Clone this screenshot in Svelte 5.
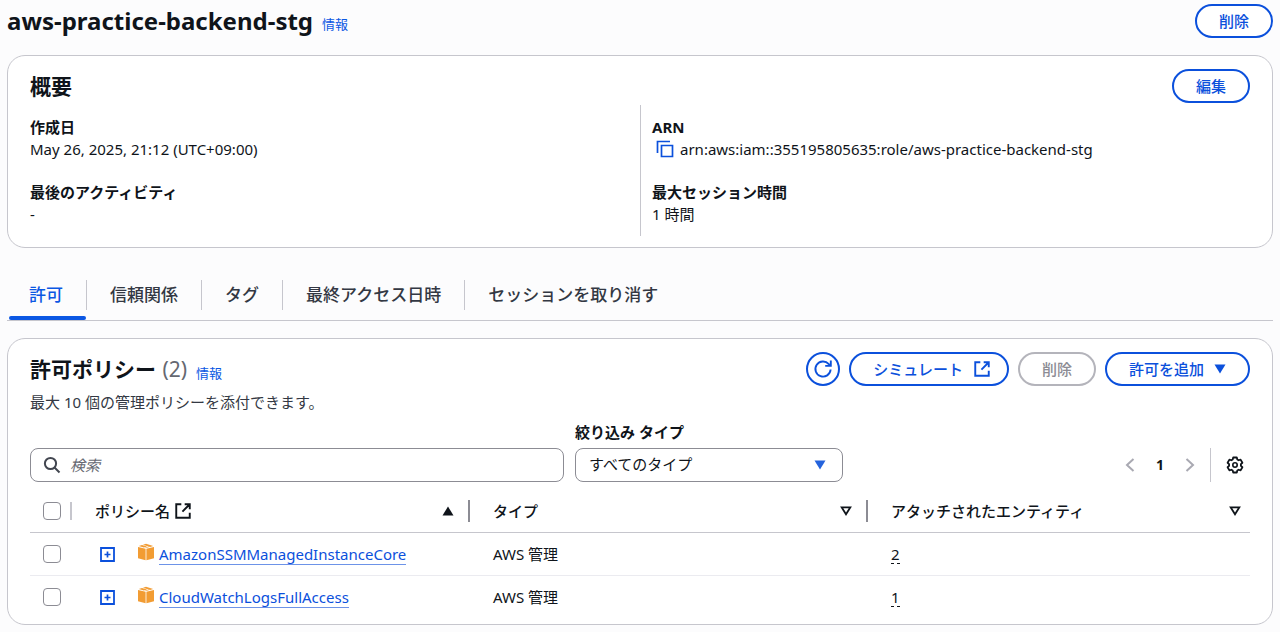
<script>
  const summaryLeft = [
    { label: '作成日', value: 'May 26, 2025, 21:12 (UTC+09:00)' },
    { label: '最後のアクティビティ', value: '-' }
  ];
  const summaryRight = [
    { label: 'ARN', value: 'arn:aws:iam::355195805635:role/aws-practice-backend-stg', copy: true },
    { label: '最大セッション時間', value: '1 時間' }
  ];
  const tabs = ['許可', '信頼関係', 'タグ', '最終アクセス日時', 'セッションを取り消す'];
  const policies = [
    { name: 'AmazonSSMManagedInstanceCore', type: 'AWS 管理', entities: 2 },
    { name: 'CloudWatchLogsFullAccess', type: 'AWS 管理', entities: 1 }
  ];
  let active = $state(0);
  let query = $state('');
</script>

{#snippet external()}
  <svg class="external" viewBox="0 0 16 16" width="18" height="18" fill="none" stroke="currentColor" stroke-width="1.7" aria-hidden="true">
    <path d="M6.5 2H2v12h12V9.5M9.5 2H14v4.5M14 2 7.5 8.5" />
  </svg>
{/snippet}

{#snippet details(items)}
  <dl>
    {#each items as item}
      <div class="pair">
        <dt>{item.label}</dt>
        <dd>
          {#if item.copy}
            <button class="bare copy" aria-label="コピー">
              <svg viewBox="0 0 18 18" width="18" height="18" fill="none" stroke="currentColor" stroke-width="1.7" aria-hidden="true">
                <path d="M1.5 13V1.5H14M5.5 5.5h11v11h-11z" />
              </svg>
            </button>
          {/if}
          <span>{item.value}</span>
        </dd>
      </div>
    {/each}
  </dl>
{/snippet}

<main>
  <header class="title-row">
    <h1>aws-practice-backend-stg</h1>
    <a class="info" href="#info">情報</a>
    <button class="btn push">削除</button>
  </header>

  <section class="card summary">
    <div class="row">
      <h2>概要</h2>
      <button class="btn push">編集</button>
    </div>
    <div class="columns">
      {@render details(summaryLeft)}
      {@render details(summaryRight)}
    </div>
  </section>

  <div class="tabs" role="tablist">
    {#each tabs as tab, i}
      <button class="tab" class:active={active === i} role="tab" aria-selected={active === i} onclick={() => (active = i)}>
        <span>{tab}</span>
      </button>
    {/each}
  </div>

  <section class="card policies">
    <div class="row">
      <h2>許可ポリシー <span class="count">(2)</span></h2>
      <a class="info" href="#info">情報</a>
      <div class="actions push">
        <button class="btn round" aria-label="更新">
          <svg viewBox="0 0 20 20" width="20" height="20" fill="none" stroke="currentColor" stroke-width="1.9" aria-hidden="true">
            <path d="M17.6 10.500A7.600 7.600 0 1 1 15.800 5.100L17.400 6.600M17.800 1.600V6.900h-5.600" />
          </svg>
        </button>
        <button class="btn">シミュレート {@render external()}</button>
        <button class="btn" disabled>削除</button>
        <button class="btn">許可を追加
          <svg viewBox="0 0 12 10" width="12" height="10" aria-hidden="true"><path d="M.5.5h11L6 9.5z" fill="currentColor" /></svg>
        </button>
      </div>
    </div>
    <p class="description">最大 10 個の管理ポリシーを添付できます。</p>

    <div class="filters">
      <div class="search">
        <svg viewBox="0 0 18 18" width="18" height="18" fill="none" stroke="currentColor" stroke-width="2" aria-hidden="true">
          <circle cx="7.5" cy="7.5" r="5.6" /><path d="m11.5 11.5 5 5" />
        </svg>
        <input type="text" placeholder="検索" aria-label="検索" bind:value={query} />
      </div>
      <div class="type">
        <label for="type">絞り込み タイプ</label>
        <div class="select">
          <select id="type"><option>すべてのタイプ</option></select>
          <svg viewBox="0 0 12 10" width="12" height="10" aria-hidden="true"><path d="M.5.5h11L6 9.5z" fill="currentColor" /></svg>
        </div>
      </div>
      <nav class="pager push" aria-label="ページ">
        <button class="bare" disabled aria-label="前へ">
          <svg viewBox="0 0 10 16" width="10" height="16" fill="none" stroke="currentColor" stroke-width="2"><path d="M8.5 2 2 8l6.5 6" /></svg>
        </button>
        <button class="bare page">1</button>
        <button class="bare" disabled aria-label="次へ">
          <svg viewBox="0 0 10 16" width="10" height="16" fill="none" stroke="currentColor" stroke-width="2"><path d="M1.5 2 8 8l-6.5 6" /></svg>
        </button>
        <button class="bare settings" aria-label="設定">
          <svg viewBox="0 0 18 18" width="18" height="18" fill="none" stroke="currentColor" stroke-width="1.8" stroke-linejoin="round" aria-hidden="true">
            <path d="M7.2 1.5h3.6l.5 2 1.3.75 2-.6 1.8 3.1-1.5 1.45v1.6l1.5 1.45-1.8 3.1-2-.6-1.3.75-.5 2H7.2l-.5-2-1.3-.75-2 .6-1.8-3.1 1.5-1.45V8.2L1.6 6.75l1.8-3.1 2 .6 1.3-.75z" />
            <circle cx="9" cy="9" r="2.2" stroke-width="1.6" />
          </svg>
        </button>
      </nav>
    </div>

    <table>
      <thead>
        <tr>
          <th class="check"><div class="cell"><input type="checkbox" aria-label="すべて選択" /></div></th>
          <th>
            <div class="cell">ポリシー名 {@render external()}
              <svg class="push" viewBox="0 0 12 10" width="12" height="10" aria-hidden="true"><path d="M.5 9.5h11L6 .5z" fill="currentColor" /></svg>
            </div>
          </th>
          <th>
            <div class="cell">タイプ
              <svg class="push" viewBox="0 0 12 10" width="12" height="10" fill="none" stroke="currentColor" stroke-width="1.8" aria-hidden="true"><path d="M1.7 1.4h8.6L6 8.2z" /></svg>
            </div>
          </th>
          <th>
            <div class="cell">アタッチされたエンティティ
              <svg class="push" viewBox="0 0 12 10" width="12" height="10" fill="none" stroke="currentColor" stroke-width="1.8" aria-hidden="true"><path d="M1.7 1.4h8.6L6 8.2z" /></svg>
            </div>
          </th>
        </tr>
      </thead>
      <tbody>
        {#each policies as policy}
          <tr>
            <td class="check"><input type="checkbox" aria-label={policy.name} /></td>
            <td>
              <div class="policy">
                <button class="bare" aria-label="展開">
                  <svg viewBox="0 0 15 15" width="15" height="15" fill="none" stroke="currentColor" aria-hidden="true">
                    <path d="M1 1h13v13H1z" stroke-width="1.8" /><path d="M4.5 7.5h6M7.5 4.5v6" stroke-width="1.7" />
                  </svg>
                </button>
                <svg class="box" viewBox="0 0 18 18" width="18" height="18" fill="#f29c33" aria-hidden="true">
                  <path d="M1 4 8.6 5.8v11.4L1 15.2zM17 4 9.4 5.8v11.4l7.6-2zM1.8 3.1 5 2.1l5.2 1.4-3.4 1zM6 1.8 9 .8l7.2 2.3-3.1.9zM7.8 4.8l3.3-1 1.2.3L9 5.1z" />
                </svg>
                <a class="name" href="#policy">{policy.name}</a>
              </div>
            </td>
            <td>{policy.type}</td>
            <td><button class="bare entities">{policy.entities}</button></td>
          </tr>
        {/each}
      </tbody>
    </table>
  </section>
</main>

<style>
  :global(body) {
    margin: 0;
    background: #fcfcfd;
  }
  main,
  button,
  input,
  select {
    font-family: 'Noto Sans', 'Noto Sans CJK JP', sans-serif;
    font-size: 15px;
    line-height: 22px;
    color: #0f141a;
  }
  main {
    padding: 3px 7px 7px;
  }
  h1,
  h2,
  p,
  dl,
  dd {
    margin: 0;
  }
  svg {
    display: block;
    flex: none;
  }
  button {
    cursor: pointer;
  }
  .push {
    margin-left: auto;
  }
  .title-row,
  .row {
    display: flex;
    align-items: center;
  }
  h1 {
    font-size: 24px;
    line-height: 35px;
    font-weight: 700;
  }
  h2 {
    font-size: 21px;
    line-height: 34px;
    font-weight: 700;
  }
  .count {
    margin-left: 1px;
    color: #656871;
    font-weight: 400;
  }
  .info {
    margin-left: 9px;
    padding-top: 7px;
    font-size: 13px;
    line-height: 20px;
    color: #0b57e3;
    text-decoration: none;
  }
  .btn {
    display: flex;
    align-items: center;
    justify-content: center;
    gap: 10px;
    box-sizing: border-box;
    height: 34px;
    padding: 0 22px;
    border: 2px solid #0b50dc;
    border-radius: 17px;
    background: #fff;
    color: #0b50dc;
    font-weight: 500;
    white-space: nowrap;
  }
  .btn .external {
    margin-right: -6px;
  }
  .btn:disabled {
    border-color: #b4b4bb;
    color: #8c8c94;
  }
  .btn.round {
    width: 34px;
    padding: 0;
  }
  .bare {
    display: flex;
    padding: 0;
    border: 0;
    background: none;
    color: #0b50dc;
  }
  .card {
    border: 1px solid #c6c6cd;
    border-radius: 18px;
    background: #fff;
    padding: 13px 22px 11px;
  }
  .summary {
    margin-top: 17px;
  }
  .columns {
    display: grid;
    grid-template-columns: 1fr 1fr;
    margin-top: 2px;
  }
  dl {
    display: grid;
    gap: 21px;
    padding: 11px 0;
  }
  dl + dl {
    border-left: 1px solid #c6c6cd;
    padding-left: 11px;
  }
  dt {
    font-weight: 700;
  }
  dd {
    display: flex;
    align-items: center;
  }
  .copy {
    padding: 0 6px 0 4px;
  }
  .tabs {
    display: flex;
    margin-top: 26px;
    border-bottom: 1px solid #c6c6cd;
  }
  .tab {
    padding: 6px 0 10px;
    border: 0;
    background: none;
    font-size: 17px;
    line-height: 30px;
    font-weight: 500;
    color: #333843;
  }
  .tab span {
    display: block;
    padding: 0 23px;
    border-right: 1px solid #c6c6cd;
  }
  .tab:first-child span {
    padding-left: 22px;
  }
  .tab:last-child span {
    border-right: 0;
  }
  .tab.active {
    color: #0b57e3;
  }
  .tab.active::after {
    content: '';
    display: block;
    height: 4px;
    margin: 6px 1px -10px 2px;
    border-radius: 2px;
    background: #0b57e3;
  }
  .policies {
    margin-top: 17px;
    padding-bottom: 6px;
  }
  .actions {
    display: flex;
    gap: 9px;
  }
  .description {
    margin-top: 5px;
    color: #333843;
  }
  .filters {
    display: flex;
    align-items: flex-end;
    gap: 11px;
    margin-top: 8px;
  }
  .search {
    flex: 0 1 534px;
    display: flex;
    align-items: center;
    gap: 9px;
    box-sizing: border-box;
    height: 34px;
    padding: 0 12px;
    border: 1px solid #8c8c94;
    border-radius: 8px;
    background: #fff;
    color: #424650;
  }
  .search input {
    flex: 1;
    min-width: 0;
    padding: 0;
    border: 0;
    outline: 0;
    background: none;
  }
  .search input::placeholder {
    color: #656871;
    font-style: italic;
    opacity: 1;
  }
  .type {
    flex: 0 1 268px;
  }
  .type label {
    display: block;
    margin-bottom: 5px;
    font-weight: 700;
  }
  .select {
    display: grid;
    align-items: center;
  }
  .select select,
  .select svg {
    grid-area: 1 / 1;
  }
  .select select {
    appearance: none;
    box-sizing: border-box;
    width: 100%;
    height: 34px;
    padding: 0 40px 2px 13px;
    border: 1px solid #8c8c94;
    border-radius: 8px;
    background: #fff;
  }
  .select svg {
    justify-self: end;
    margin-right: 17px;
    color: #2463dc;
    pointer-events: none;
  }
  .pager {
    display: flex;
    align-items: center;
    gap: 21px;
    height: 34px;
  }
  .pager .bare:disabled {
    color: #a9a9b2;
  }
  .pager .page {
    color: #0f141a;
    font-weight: 700;
    font-size: 14px;
  }
  .pager .settings {
    align-items: center;
    height: 34px;
    margin-left: -6px;
    padding: 0 6px 0 15px;
    border-left: 1px solid #c6c6cd;
    color: #0f141a;
  }
  table {
    width: 100%;
    margin-top: 8px;
    table-layout: fixed;
    border-collapse: collapse;
  }
  th,
  td {
    height: 42px;
    padding: 0 0 0 23px;
    text-align: left;
    font-weight: 400;
    border-bottom: 1px solid #ebebf0;
  }
  th {
    font-weight: 500;
    border-bottom-color: #c6c6cd;
  }
  tbody tr:last-child td {
    border-bottom: 0;
  }
  .check {
    width: 29px;
    padding-left: 13px;
  }
  .cell {
    display: flex;
    align-items: center;
    gap: 4px;
    padding-right: 14px;
    border-right: 2px solid #8c8c94;
  }
  .check .cell {
    padding-right: 10px;
    border-color: #c6c6cd;
  }
  th:last-child .cell {
    padding-right: 9px;
    border-right: 0;
  }
  th:last-child {
    width: 359px;
  }
  input[type='checkbox'] {
    display: block;
    appearance: none;
    flex: none;
    box-sizing: border-box;
    width: 18px;
    height: 18px;
    margin: 0;
    border: 1px solid #8c8c94;
    border-radius: 4px;
    background: #fff;
  }
  .policy {
    display: flex;
    align-items: center;
    padding-left: 5px;
  }
  .box {
    margin: 0 4px 4px 22px;
  }
  .name {
    color: #0b50dc;
    text-decoration: none;
    line-height: 20px;
    border-bottom: 1px solid #6d93e8;
  }
  .entities {
    color: #0f141a;
    line-height: 18px;
    border-bottom: 1px dashed #0f141a;
  }
</style>
